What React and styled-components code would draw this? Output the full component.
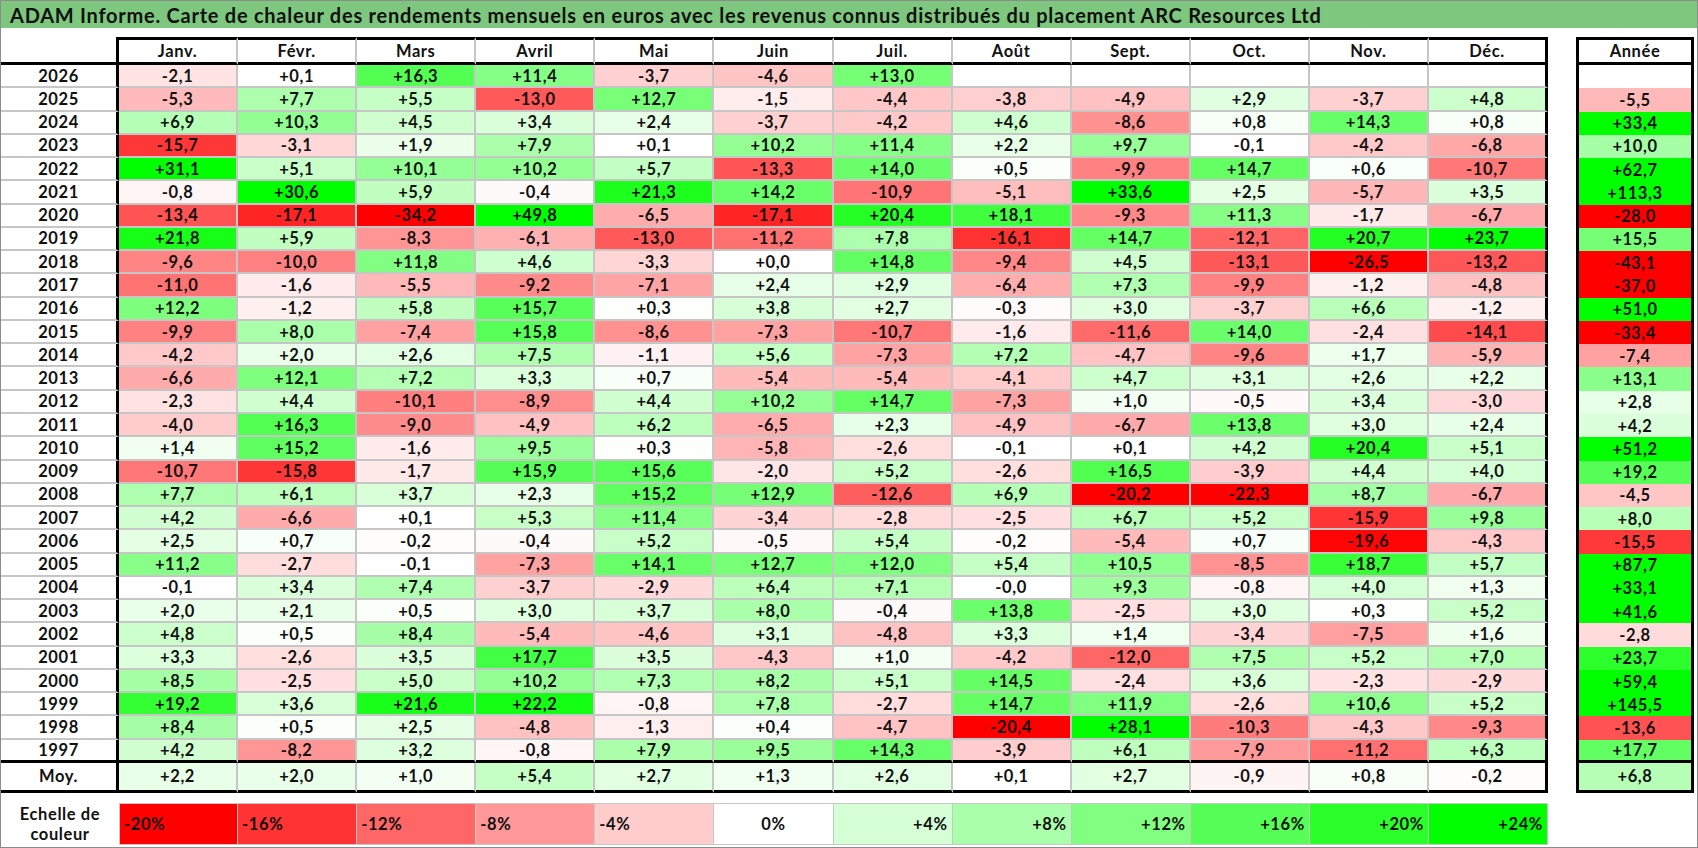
import React from "react";
import styled, { createGlobalStyle } from "styled-components";

const GlobalStyle = createGlobalStyle`
  html, body {
    margin: 0;
    padding: 0;
    background: #fff;
  }
  body {
    font-family: Lato, "Open Sans", sans-serif;
    color: #000;
  }
`;

const MONTHS = ["Janv.", "Févr.", "Mars", "Avril", "Mai", "Juin", "Juil.", "Août", "Sept.", "Oct.", "Nov.", "Déc."];

// year, 12 monthly values, yearly value
const ROWS = [
  ["2026", "-2,1 +0,1 +16,3 +11,4 -3,7 -4,6 +13,0 . . . . .", ""],
  ["2025", "-5,3 +7,7 +5,5 -13,0 +12,7 -1,5 -4,4 -3,8 -4,9 +2,9 -3,7 +4,8", "-5,5"],
  ["2024", "+6,9 +10,3 +4,5 +3,4 +2,4 -3,7 -4,2 +4,6 -8,6 +0,8 +14,3 +0,8", "+33,4"],
  ["2023", "-15,7 -3,1 +1,9 +7,9 +0,1 +10,2 +11,4 +2,2 +9,7 -0,1 -4,2 -6,8", "+10,0"],
  ["2022", "+31,1 +5,1 +10,1 +10,2 +5,7 -13,3 +14,0 +0,5 -9,9 +14,7 +0,6 -10,7", "+62,7"],
  ["2021", "-0,8 +30,6 +5,9 -0,4 +21,3 +14,2 -10,9 -5,1 +33,6 +2,5 -5,7 +3,5", "+113,3"],
  ["2020", "-13,4 -17,1 -34,2 +49,8 -6,5 -17,1 +20,4 +18,1 -9,3 +11,3 -1,7 -6,7", "-28,0"],
  ["2019", "+21,8 +5,9 -8,3 -6,1 -13,0 -11,2 +7,8 -16,1 +14,7 -12,1 +20,7 +23,7", "+15,5"],
  ["2018", "-9,6 -10,0 +11,8 +4,6 -3,3 +0,0 +14,8 -9,4 +4,5 -13,1 -26,5 -13,2", "-43,1"],
  ["2017", "-11,0 -1,6 -5,5 -9,2 -7,1 +2,4 +2,9 -6,4 +7,3 -9,9 -1,2 -4,8", "-37,0"],
  ["2016", "+12,2 -1,2 +5,8 +15,7 +0,3 +3,8 +2,7 -0,3 +3,0 -3,7 +6,6 -1,2", "+51,0"],
  ["2015", "-9,9 +8,0 -7,4 +15,8 -8,6 -7,3 -10,7 -1,6 -11,6 +14,0 -2,4 -14,1", "-33,4"],
  ["2014", "-4,2 +2,0 +2,6 +7,5 -1,1 +5,6 -7,3 +7,2 -4,7 -9,6 +1,7 -5,9", "-7,4"],
  ["2013", "-6,6 +12,1 +7,2 +3,3 +0,7 -5,4 -5,4 -4,1 +4,7 +3,1 +2,6 +2,2", "+13,1"],
  ["2012", "-2,3 +4,4 -10,1 -8,9 +4,4 +10,2 +14,7 -7,3 +1,0 -0,5 +3,4 -3,0", "+2,8"],
  ["2011", "-4,0 +16,3 -9,0 -4,9 +6,2 -6,5 +2,3 -4,9 -6,7 +13,8 +3,0 +2,4", "+4,2"],
  ["2010", "+1,4 +15,2 -1,6 +9,5 +0,3 -5,8 -2,6 -0,1 +0,1 +4,2 +20,4 +5,1", "+51,2"],
  ["2009", "-10,7 -15,8 -1,7 +15,9 +15,6 -2,0 +5,2 -2,6 +16,5 -3,9 +4,4 +4,0", "+19,2"],
  ["2008", "+7,7 +6,1 +3,7 +2,3 +15,2 +12,9 -12,6 +6,9 -20,2 -22,3 +8,7 -6,7", "-4,5"],
  ["2007", "+4,2 -6,6 +0,1 +5,3 +11,4 -3,4 -2,8 -2,5 +6,7 +5,2 -15,9 +9,8", "+8,0"],
  ["2006", "+2,5 +0,7 -0,2 -0,4 +5,2 -0,5 +5,4 -0,2 -5,4 +0,7 -19,6 -4,3", "-15,5"],
  ["2005", "+11,2 -2,7 -0,1 -7,3 +14,1 +12,7 +12,0 +5,4 +10,5 -8,5 +18,7 +5,7", "+87,7"],
  ["2004", "-0,1 +3,4 +7,4 -3,7 -2,9 +6,4 +7,1 -0,0 +9,3 -0,8 +4,0 +1,3", "+33,1"],
  ["2003", "+2,0 +2,1 +0,5 +3,0 +3,7 +8,0 -0,4 +13,8 -2,5 +3,0 +0,3 +5,2", "+41,6"],
  ["2002", "+4,8 +0,5 +8,4 -5,4 -4,6 +3,1 -4,8 +3,3 +1,4 -3,4 -7,5 +1,6", "-2,8"],
  ["2001", "+3,3 -2,6 +3,5 +17,7 +3,5 -4,3 +1,0 -4,2 -12,0 +7,5 +5,2 +7,0", "+23,7"],
  ["2000", "+8,5 -2,5 +5,0 +10,2 +7,3 +8,2 +5,1 +14,5 -2,4 +3,6 -2,3 -2,9", "+59,4"],
  ["1999", "+19,2 +3,6 +21,6 +22,2 -0,8 +7,8 -2,7 +14,7 +11,9 -2,6 +10,6 +5,2", "+145,5"],
  ["1998", "+8,4 +0,5 +2,5 -4,8 -1,3 +0,4 -4,7 -20,4 +28,1 -10,3 -4,3 -9,3", "-13,6"],
  ["1997", "+4,2 -8,2 +3,2 -0,8 +7,9 +9,5 +14,3 -3,9 +6,1 -7,9 -11,2 +6,3", "+17,7"],
];

const AVERAGE = ["Moy.", "+2,2 +2,0 +1,0 +5,4 +2,7 +1,3 +2,6 +0,1 +2,7 -0,9 +0,8 -0,2", "+6,8"];

const SCALE = [
  { label: "-20%", align: "flex-start" },
  { label: "-16%", align: "flex-start" },
  { label: "-12%", align: "flex-start" },
  { label: "-8%", align: "flex-start" },
  { label: "-4%", align: "flex-start" },
  { label: "0%", align: "center" },
  { label: "+4%", align: "flex-end" },
  { label: "+8%", align: "flex-end" },
  { label: "+12%", align: "flex-end" },
  { label: "+16%", align: "flex-end" },
  { label: "+20%", align: "flex-end" },
  { label: "+24%", align: "flex-end" },
];

const heat = (text, posMax = 24, negMax = 20) => {
  if (!text) return "#ffffff";
  const v = parseFloat(text.replace(",", ".").replace("%", ""));
  const t = Math.min(Math.abs(v) / (v >= 0 ? posMax : negMax), 1);
  const c = Math.round(255 * (1 - t));
  return v >= 0 ? `rgb(${c},255,${c})` : `rgb(255,${c},${c})`;
};

const THICK = "3px solid #000";
const THIN = "2px solid #c6c6c6";
const ROW_TEMPLATE = "28px repeat(30, 23.27px) 30px";

const Frame = styled.div`
  width: 1698px;
  height: 848px;
  box-sizing: border-box;
  border: 1px solid #8c8c8c;
  display: flex;
  flex-direction: column;
  background: #fff;
`;

const TitleBar = styled.div`
  height: 27px;
  flex: none;
  display: flex;
  align-items: center;
  padding-left: 9px;
  background: #7ec77e;
  font-size: 20px;
  letter-spacing: 0.75px;
  font-weight: 700;
  color: #111;
  white-space: nowrap;
`;

const Tables = styled.div`
  margin-top: 9px;
  display: flex;
  gap: 28px;
`;

const MainGrid = styled.div`
  width: 1547px;
  display: grid;
  grid-template-columns: 118px repeat(12, 1fr);
  grid-template-rows: ${ROW_TEMPLATE};
`;

const YearGrid = styled.div`
  width: 118px;
  box-sizing: border-box;
  display: grid;
  grid-template-columns: 1fr;
  grid-template-rows: ${ROW_TEMPLATE};
  border-left: ${THICK};
  border-right: ${THICK};
`;

const BaseCell = styled.div`
  box-sizing: border-box;
  display: flex;
  align-items: center;
  justify-content: center;
  font-size: 16.5px;
  letter-spacing: 0.6px;
  font-weight: 700;
  color: #111;
  white-space: nowrap;
`;

const Corner = styled(BaseCell)`
  border-right: ${THICK};
  border-bottom: ${THICK};
`;

const HeadCell = styled(BaseCell)`
  border-top: ${THICK};
  border-bottom: ${THICK};
  border-right: ${(p) => (p.$last ? THICK : THIN)};
`;

const RowLabel = styled(BaseCell)`
  border-right: ${THICK};
  border-bottom: ${(p) => (p.$closing ? THICK : THIN)};
`;

const ValueCell = styled(BaseCell)`
  background: ${(p) => p.$bg};
  border-right: ${(p) => (p.$last ? THICK : THIN)};
  border-bottom: ${(p) => (p.$closing ? THICK : THIN)};
`;

const YearHead = styled(BaseCell)`
  border-top: ${THICK};
  border-bottom: ${THICK};
`;

const YearCell = styled(BaseCell)`
  background: ${(p) => p.$bg};
  border-bottom: ${(p) => (p.$closing ? THICK : "none")};
`;

const ScaleRow = styled.div`
  margin-top: 10px;
  width: 1547px;
  height: 42px;
  display: grid;
  grid-template-columns: 118px repeat(12, 1fr);
`;

const ScaleLabel = styled(BaseCell)`
  flex-direction: column;
  line-height: 20px;
  text-align: center;
`;

const ScaleCell = styled(BaseCell)`
  justify-content: ${(p) => p.$align};
  padding: 0 4px;
  background: ${(p) => p.$bg};
  border: 1px solid #c6c6c6;
  border-left: none;
  &:nth-child(2) {
    border-left: 1px solid #c6c6c6;
  }
`;

const split = (s) => s.split(" ").map((v) => (v === "." ? "" : v));

export default function App() {
  const body = [...ROWS, AVERAGE];
  return (
    <>
      <GlobalStyle />
      <Frame>
        <TitleBar>
          ADAM Informe. Carte de chaleur des rendements mensuels en euros avec les revenus connus distribués du
          placement ARC Resources Ltd
        </TitleBar>
        <Tables>
          <MainGrid>
            <Corner />
            {MONTHS.map((m, i) => (
              <HeadCell key={m} $last={i === 11}>
                {m}
              </HeadCell>
            ))}
            {body.map(([year, values], r) => {
              const closing = r >= ROWS.length - 1;
              return (
                <React.Fragment key={year}>
                  <RowLabel $closing={closing}>{year}</RowLabel>
                  {split(values).map((v, i) => (
                    <ValueCell key={i} $bg={heat(v)} $last={i === 11} $closing={closing}>
                      {v}
                    </ValueCell>
                  ))}
                </React.Fragment>
              );
            })}
          </MainGrid>
          <YearGrid>
            <YearHead>Année</YearHead>
            {body.map(([year, , total], r) => (
              <YearCell
                key={year}
                $bg={r === ROWS.length ? heat(total) : heat(total, 28.8, 20)}
                $closing={r >= ROWS.length - 1}
              >
                {total}
              </YearCell>
            ))}
          </YearGrid>
        </Tables>
        <ScaleRow>
          <ScaleLabel>
            <span>Echelle de</span>
            <span>couleur</span>
          </ScaleLabel>
          {SCALE.map((s) => (
            <ScaleCell key={s.label} $align={s.align} $bg={heat(s.label)}>
              {s.label}
            </ScaleCell>
          ))}
        </ScaleRow>
      </Frame>
    </>
  );
}
